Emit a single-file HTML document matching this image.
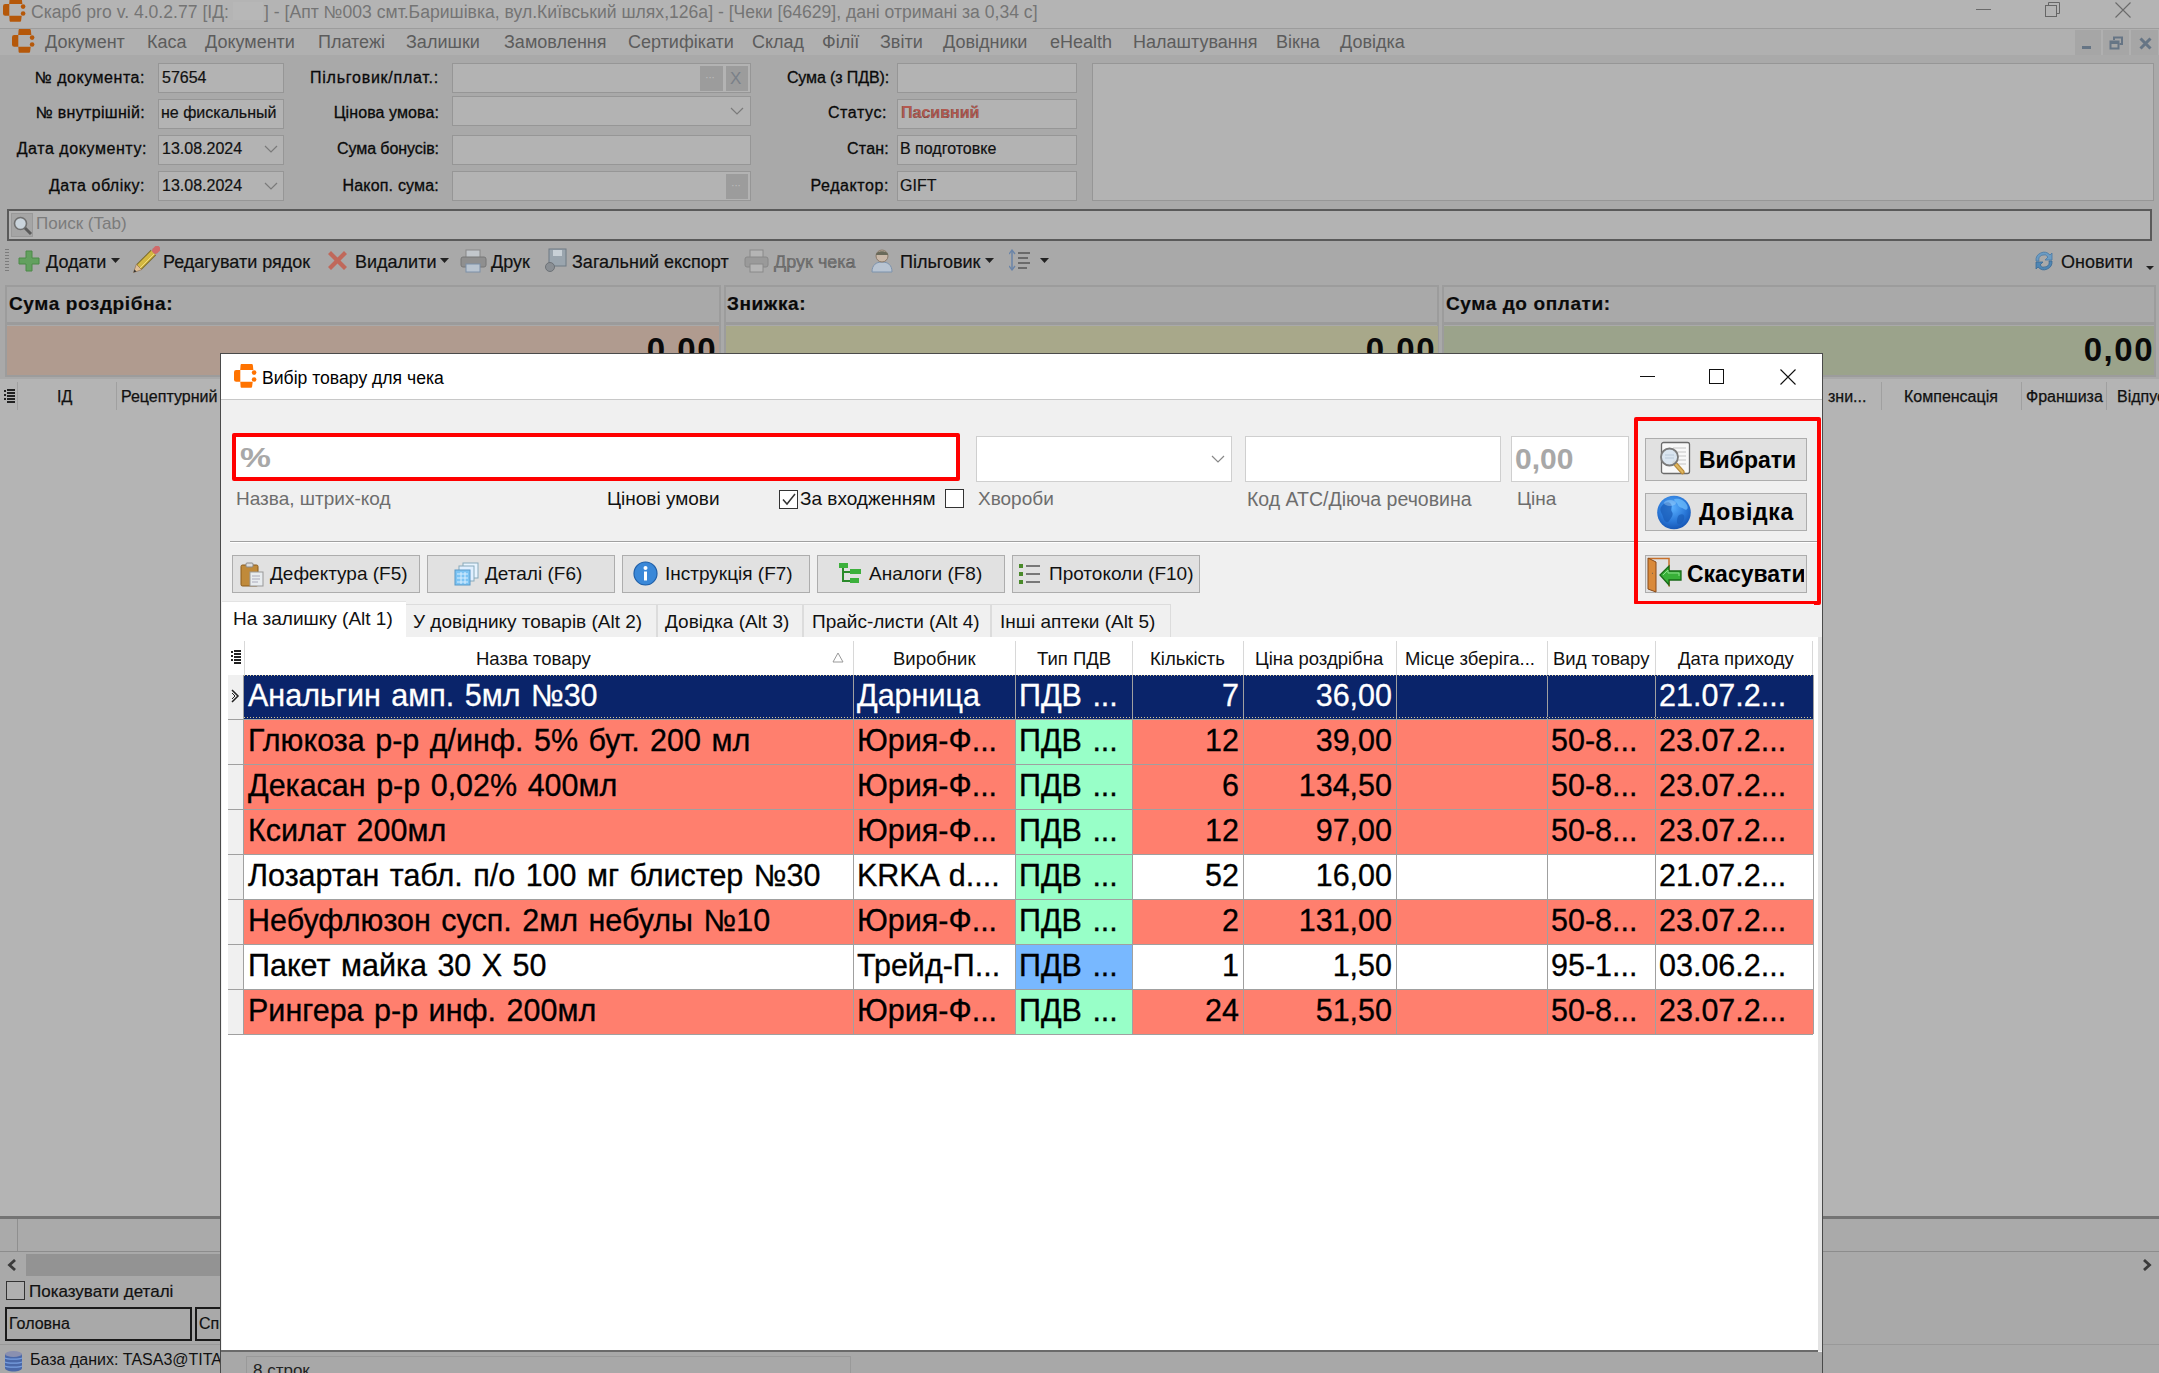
<!DOCTYPE html>
<html><head><meta charset="utf-8">
<style>
*{box-sizing:border-box;margin:0;padding:0}
html,body{width:2159px;height:1373px;overflow:hidden}
body{position:relative;background:#a9a9a9;font-family:"Liberation Sans",sans-serif;color:#000}
.a{position:absolute;white-space:nowrap}
#title{left:0;top:0;width:2159px;height:29px;background:#b4b4b4;border-bottom:1px solid #9c9c9c}
#menu{left:0;top:29px;width:2159px;height:26px;background:#b0b0b0}
.mi{top:32px;font-size:18px;color:#5c5c5c}
.lbl{font-size:16px;color:#0a0a0a;text-align:right;-webkit-text-stroke:0.3px #0a0a0a}
.inp{background:#b3b3b3;border:1px solid #969696;height:30px}
.itx{font-size:16px;color:#111;-webkit-text-stroke:0.2px #111}

.tb{top:252px;font-size:18px;color:#111;-webkit-text-stroke:0.2px #111}
.sp{top:285px;height:92px;background:#a9a9a9;border:2px solid #9c9c9c}
.sv{top:326px;height:49px}
.sh{top:293px;font-size:19px;font-weight:bold;color:#0a0a0a;letter-spacing:0.6px;-webkit-text-stroke:0.2px #0a0a0a}
.snum{top:331px;font-size:33px;font-weight:bold;color:#0a0a0a;letter-spacing:1.5px}
.gh{top:388px;font-size:16px;color:#111;-webkit-text-stroke:0.25px #111}

.dlbl{top:488px;font-size:19px}
.btn{background:#e1e1e1;border:1px solid #adadad}
.bbt{font-size:23px;font-weight:bold;color:#000}
.fbt{top:563px;font-size:19px;color:#111}
.tab{top:604px;height:33px;background:#f0f0f0;border:1px solid #dcdcdc;border-bottom:none}
.ttx{top:611px;font-size:19px;color:#111}
.ghd{top:648px;font-size:18.5px;color:#111}
.gr{font-size:30.5px;word-spacing:2px;-webkit-text-stroke:0.3px currentColor}
</style></head><body>

<!-- TITLE -->
<div class="a" id="title"></div>
<svg class="a" style="left:2px;top:-3px" width="26" height="27"><g fill="#b5580a"><path d="M8.2 1h10.6q0.8 0 1 1l0.6 5H7.2l0.4-5q0.1-1 0.6-1z"/><path d="M7.3 7v11.8H3.2Q1 18.8 1 16.5v-7.2Q1 7 3.2 7z"/><path d="M7.3 18.8h12.4l-0.6 5q-0.2 1-1 1H8.4q-0.7 0-0.8-1z"/><circle cx="21.1" cy="9.6" r="2.3"/><circle cx="21.1" cy="16.5" r="2.3"/></g></svg>
<div class="a" style="left:31px;top:2px;font-size:17.6px;color:#747474">Скарб pro v. 4.0.2.77 [ІД:</div>
<div class="a" style="left:233px;top:2px;width:30px;height:18px;background:#b7b7b7"></div>
<div class="a" style="left:264px;top:2px;font-size:17.6px;color:#747474">] - [Апт №003 смт.Баришівка, вул.Київський шлях,126а] - [Чеки [64629], дані отримані за 0,34 с]</div>

<!-- MENU -->
<div class="a" id="menu"></div>
<svg class="a" style="left:11px;top:28px" width="26" height="27"><g fill="#b5580a"><path d="M8.2 1h10.6q0.8 0 1 1l0.6 5H7.2l0.4-5q0.1-1 0.6-1z"/><path d="M7.3 7v11.8H3.2Q1 18.8 1 16.5v-7.2Q1 7 3.2 7z"/><path d="M7.3 18.8h12.4l-0.6 5q-0.2 1-1 1H8.4q-0.7 0-0.8-1z"/><circle cx="21.1" cy="9.6" r="2.3"/><circle cx="21.1" cy="16.5" r="2.3"/></g></svg>
<div class="a mi" style="left:45px">Документ</div>
<div class="a mi" style="left:147px">Каса</div>
<div class="a mi" style="left:205px">Документи</div>
<div class="a mi" style="left:318px">Платежі</div>
<div class="a mi" style="left:406px">Залишки</div>
<div class="a mi" style="left:504px">Замовлення</div>
<div class="a mi" style="left:628px">Сертифікати</div>
<div class="a mi" style="left:752px">Склад</div>
<div class="a mi" style="left:822px">Філії</div>
<div class="a mi" style="left:880px">Звіти</div>
<div class="a mi" style="left:943px">Довідники</div>
<div class="a mi" style="left:1050px">eHealth</div>
<div class="a mi" style="left:1133px">Налаштування</div>
<div class="a mi" style="left:1276px">Вікна</div>
<div class="a mi" style="left:1340px">Довідка</div>

<!-- FORM -->
<div class="a lbl" style="right:2014px;top:69px;letter-spacing:0.54px">№ документа:</div>
<div class="a lbl" style="right:2014px;top:104px;letter-spacing:0.32px">№ внутрішній:</div>
<div class="a lbl" style="right:2012px;top:140px;letter-spacing:0.57px">Дата документу:</div>
<div class="a lbl" style="right:2014px;top:177px;letter-spacing:0.52px">Дата обліку:</div>
<div class="a inp" style="left:158px;top:63px;width:126px"></div>
<div class="a inp" style="left:158px;top:99px;width:126px"></div>
<div class="a inp" style="left:158px;top:135px;width:126px"></div>
<div class="a inp" style="left:158px;top:171px;width:126px"></div>
<div class="a itx" style="left:162px;top:69px">57654</div>
<div class="a itx" style="left:161px;top:104px">не фискальный</div>
<div class="a itx" style="left:162px;top:140px">13.08.2024</div>
<div class="a itx" style="left:162px;top:177px">13.08.2024</div>

<div class="a lbl" style="right:1720px;top:69px;letter-spacing:0.75px">Пільговик/плат.:</div>
<div class="a lbl" style="right:1720px;top:104px;letter-spacing:0.09px">Цінова умова:</div>
<div class="a lbl" style="right:1720px;top:140px;letter-spacing:-0.07px">Сума бонусів:</div>
<div class="a lbl" style="right:1720px;top:177px;letter-spacing:0.19px">Накоп. сума:</div>
<div class="a inp" style="left:452px;top:63px;width:299px"></div>
<div class="a inp" style="left:452px;top:96px;width:299px"></div>
<div class="a inp" style="left:452px;top:135px;width:299px"></div>
<div class="a inp" style="left:452px;top:171px;width:299px"></div>

<div class="a lbl" style="right:1270px;top:69px;letter-spacing:-0.12px">Сума (з ПДВ):</div>
<div class="a lbl" style="right:1272px;top:104px;letter-spacing:0.57px">Статус:</div>
<div class="a lbl" style="right:1270px;top:140px;letter-spacing:0.22px">Стан:</div>
<div class="a lbl" style="right:1270px;top:177px;letter-spacing:0.58px">Редактор:</div>
<div class="a inp" style="left:897px;top:63px;width:180px"></div>
<div class="a inp" style="left:897px;top:99px;width:180px"></div>
<div class="a inp" style="left:897px;top:135px;width:180px"></div>
<div class="a inp" style="left:897px;top:171px;width:180px"></div>
<div class="a itx" style="left:901px;top:104px;color:#b5584f;font-weight:bold">Пасивний</div>
<div class="a itx" style="left:900px;top:140px">В подготовке</div>
<div class="a itx" style="left:900px;top:177px">GIFT</div>


<svg class="a" style="left:264px;top:145px" width="14" height="8"><path d="M1 1l6 6 6-6" fill="none" stroke="#7a7a7a" stroke-width="1.2"/></svg>
<svg class="a" style="left:264px;top:182px" width="14" height="8"><path d="M1 1l6 6 6-6" fill="none" stroke="#7a7a7a" stroke-width="1.2"/></svg>
<svg class="a" style="left:730px;top:107px" width="14" height="8"><path d="M1 1l6 6 6-6" fill="none" stroke="#7a7a7a" stroke-width="1.2"/></svg>
<div class="a" style="left:700px;top:66px;width:23px;height:25px;background:#9c9c9c"></div>
<div class="a" style="left:726px;top:66px;width:22px;height:25px;background:#9c9c9c"></div>
<div class="a" style="left:726px;top:174px;width:22px;height:25px;background:#9c9c9c"></div>
<div class="a" style="left:705px;top:71px;font-size:11px;color:#bdbdbd;letter-spacing:-0.5px">···</div>
<div class="a" style="left:731px;top:179px;font-size:11px;color:#bdbdbd;letter-spacing:-0.5px">···</div>
<div class="a" style="left:730px;top:69px;font-size:17px;color:#7a8088">X</div>
<div class="a inp" style="left:1092px;top:63px;width:1062px;height:138px"></div>


<!-- WINDOW CONTROLS -->
<div class="a" style="left:1976px;top:9px;width:15px;height:1px;background:#6a6a6a"></div>
<svg class="a" style="left:2044px;top:1px" width="18" height="18"><path d="M4.5 4.5V1.5h11v11h-3" fill="none" stroke="#666" stroke-width="1"/><rect x="1.5" y="4.5" width="11" height="11" fill="none" stroke="#666" stroke-width="1"/></svg>
<svg class="a" style="left:2115px;top:2px" width="16" height="16"><path d="M0.5 0.5L15.5 15.5M15.5 0.5L0.5 15.5" stroke="#6a6a6a" stroke-width="1.1"/></svg>
<!-- MDI buttons -->
<div class="a" style="left:2075px;top:30px;width:26px;height:25px;background:#a6a6a6"></div>
<div class="a" style="left:2103px;top:30px;width:26px;height:25px;background:#a6a6a6"></div>
<div class="a" style="left:2131px;top:30px;width:27px;height:25px;background:#a6a6a6"></div>
<div class="a" style="left:2082px;top:46px;width:9px;height:3px;background:#667585"></div>
<svg class="a" style="left:2109px;top:36px" width="16" height="14"><path d="M5 4V1.5h8v6.5h-2.5" fill="none" stroke="#667585" stroke-width="2"/><rect x="1.5" y="5.5" width="8" height="7" fill="none" stroke="#667585" stroke-width="2"/><path d="M1 6.5h9" stroke="#667585" stroke-width="3"/></svg>
<svg class="a" style="left:2139px;top:37px" width="13" height="13"><path d="M1.5 1.5L11.5 11.5M11.5 1.5L1.5 11.5" stroke="#667585" stroke-width="3"/></svg>

<!-- SEARCH BAR -->
<div class="a" style="left:7px;top:209px;width:2145px;height:32px;border:2px solid #5a5a5a;background:#b3b3b3"></div>
<div class="a" style="left:11px;top:213px;width:22px;height:24px;background:#a5a5a5;border:1px solid #999"></div>
<svg class="a" style="left:12px;top:215px" width="22" height="22"><circle cx="8.5" cy="8.5" r="6" fill="#c9d3db" stroke="#6f6f6f" stroke-width="1.6"/><path d="M13 13L19 19" stroke="#5a5a5a" stroke-width="3"/></svg>
<div class="a" style="left:36px;top:214px;font-size:17px;color:#7b7b7b">Поиск (Tab)</div>

<!-- TOOLBAR -->
<div class="a" style="left:5px;top:249px;width:4px;height:23px;background:repeating-linear-gradient(180deg,#7c7c7c 0 1.5px,transparent 1.5px 3px)"></div>
<svg class="a" style="left:18px;top:250px" width="22" height="22"><path d="M8 1h6v7h7v6h-7v7H8v-7H1V8h7z" fill="#63a05f" stroke="#4d8a49" stroke-width="1"/></svg>
<div class="a tb" style="left:46px">Додати</div>
<svg class="a" style="left:111px;top:258px" width="9" height="5"><path d="M0 0h9L4.5 5z" fill="#222"/></svg>
<svg class="a" style="left:132px;top:246px" width="28" height="28"><line x1="7" y1="21" x2="21.5" y2="6.5" stroke="#7a6a2a" stroke-width="7.5"/><line x1="7" y1="21" x2="21.5" y2="6.5" stroke="#d4b840" stroke-width="5.5"/><line x1="8" y1="22" x2="22" y2="8" stroke="#efdc80" stroke-width="1"/><line x1="21.5" y1="6.5" x2="23.5" y2="4.5" stroke="#a0a0a0" stroke-width="7"/><line x1="23.5" y1="4.5" x2="25" y2="3" stroke="#d06a6a" stroke-width="6.5" stroke-linecap="round"/><path d="M4.35 18.35L9.65 23.65L1.5 26.5z" fill="#e0c098" stroke="#8a6a4a" stroke-width="0.6"/><path d="M1.5 26.5l3-1-2-2z" fill="#333"/></svg>
<div class="a tb" style="left:163px">Редагувати рядок</div>
<svg class="a" style="left:326px;top:250px" width="23" height="22"><path d="M2 4l3-3 6.5 6.5L18 1l3 3-6.5 6.5L21 17l-3 3-6.5-6.5L5 20l-3-3 6.5-6.5z" fill="#c0685a"/></svg>
<div class="a tb" style="left:355px">Видалити</div>
<svg class="a" style="left:440px;top:258px" width="9" height="5"><path d="M0 0h9L4.5 5z" fill="#222"/></svg>
<svg class="a" style="left:460px;top:249px" width="27" height="24"><rect x="6" y="1" width="14" height="8" fill="#c2c7cc" stroke="#888"/><rect x="1" y="8" width="25" height="10" rx="2" fill="#8f8f8f" stroke="#777"/><rect x="6" y="15" width="14" height="8" fill="#b9c4d0" stroke="#7d90a8"/></svg>
<div class="a tb" style="left:491px">Друк</div>
<svg class="a" style="left:544px;top:248px" width="23" height="25"><rect x="5" y="1" width="17" height="17" fill="#9aa5ae" stroke="#6f7a84"/><rect x="9" y="2" width="9" height="6" fill="#c8d0d6"/><circle cx="6" cy="19" r="4.5" fill="#8a8f94" stroke="#6d7277"/></svg>
<div class="a tb" style="left:572px">Загальний експорт</div>
<svg class="a" style="left:744px;top:249px" width="25" height="24"><rect x="6" y="1" width="13" height="8" fill="#b5b5b5" stroke="#8a8a8a"/><rect x="1" y="8" width="23" height="10" rx="2" fill="#9a9a9a" stroke="#888"/><rect x="6" y="15" width="13" height="8" fill="#b5b5b5" stroke="#8a8a8a"/></svg>
<div class="a tb" style="left:774px;color:#777">Друк чека</div>
<svg class="a" style="left:870px;top:248px" width="24" height="25"><path d="M2 24c0-7 4-10 10-10s10 3 10 10z" fill="#b8c4d2" stroke="#7d93ad"/><circle cx="12" cy="8" r="6" fill="#c9b8a8" stroke="#8a7a6a"/><path d="M6 7c0-5 12-5 12 0" fill="#6a6a5a"/></svg>
<div class="a tb" style="left:900px">Пільговик</div>
<svg class="a" style="left:985px;top:258px" width="9" height="5"><path d="M0 0h9L4.5 5z" fill="#222"/></svg>
<svg class="a" style="left:1009px;top:249px" width="22" height="22"><path d="M3 2v18" stroke="#6a84a8" stroke-width="1.5"/><path d="M0 5l3-4 3 4M0 17l3 4 3-4" fill="none" stroke="#6a84a8" stroke-width="1.3"/><path d="M9 4h12M9 9h10M9 14h12M9 19h9" stroke="#555" stroke-width="1.6"/></svg>
<svg class="a" style="left:1040px;top:258px" width="9" height="5"><path d="M0 0h9L4.5 5z" fill="#222"/></svg>
<svg class="a" style="left:2032px;top:249px" width="24" height="24"><path d="M4 12a8 8 0 0 1 14-6l2-2v7h-7l3-3a5 5 0 0 0-9 4z" fill="#6b9cc4" stroke="#4a7aa4" stroke-width="0.8"/><path d="M20 12a8 8 0 0 1-14 6l-2 2v-7h7l-3 3a5 5 0 0 0 9-4z" fill="#4f86b4" stroke="#3a6a94" stroke-width="0.8"/></svg>
<div class="a tb" style="left:2061px">Оновити</div>
<svg class="a" style="left:2146px;top:266px" width="8" height="4"><path d="M0 0h8L4 4z" fill="#222"/></svg>

<!-- SUMMARY PANELS -->
<div class="a sp" style="left:5px;width:716px"></div>
<div class="a sp" style="left:724px;width:715px"></div>
<div class="a sp" style="left:1442px;width:714px"></div>
<div class="a sv" style="left:7px;width:712px;background:#b09b8f"></div>
<div class="a sv" style="left:726px;width:712px;background:#a8a88a"></div>
<div class="a sv" style="left:1444px;width:710px;background:#9ba38b"></div>
<div class="a" style="left:7px;top:322px;width:712px;height:3px;background:#9b9b9b"></div>
<div class="a" style="left:726px;top:322px;width:712px;height:3px;background:#9b9b9b"></div>
<div class="a" style="left:1444px;top:322px;width:710px;height:3px;background:#9b9b9b"></div>
<div class="a sh" style="left:9px">Сума роздрібна:</div>
<div class="a sh" style="left:727px">Знижка:</div>
<div class="a sh" style="left:1446px">Сума до оплати:</div>
<div class="a snum" style="right:1442px">0,00</div>
<div class="a snum" style="right:723px">0,00</div>
<div class="a snum" style="right:5px">0,00</div>

<!-- MAIN GRID -->
<div class="a" style="left:0;top:379px;width:2159px;height:838px;background:#b4b4b4"></div>
<div class="a" style="left:17px;top:382px;width:1px;height:28px;background:#a0a0a0"></div>
<div class="a" style="left:116px;top:382px;width:1px;height:28px;background:#a0a0a0"></div>
<div class="a" style="left:1881px;top:382px;width:1px;height:28px;background:#a0a0a0"></div>
<div class="a" style="left:2021px;top:382px;width:1px;height:28px;background:#a0a0a0"></div>
<div class="a" style="left:2106px;top:382px;width:1px;height:28px;background:#a0a0a0"></div>
<svg class="a" style="left:4px;top:389px" width="11" height="14"><g fill="#222"><rect x="0" y="1" width="2" height="2"/><rect x="0" y="5" width="2" height="2"/><rect x="0" y="9" width="2" height="2"/><rect x="3" y="0" width="8" height="2"/><rect x="3" y="3" width="8" height="2"/><rect x="3" y="6" width="8" height="2"/><rect x="3" y="9" width="8" height="2"/><rect x="3" y="12" width="8" height="2"/></g></svg>
<div class="a gh" style="left:57px">ІД</div>
<div class="a gh" style="left:121px">Рецептурний</div>
<div class="a gh" style="left:1828px">зни...</div>
<div class="a gh" style="left:1904px">Компенсація</div>
<div class="a gh" style="left:2026px">Франшиза</div>
<div class="a gh" style="left:2117px">Відпуск</div>

<!-- BOTTOM -->
<div class="a" style="left:0;top:1216px;width:2159px;height:3px;background:#747474"></div>
<div class="a" style="left:0;top:1219px;width:2159px;height:32px;background:#aaaaaa"></div>
<div class="a" style="left:17px;top:1219px;width:1px;height:32px;background:#8f8f8f"></div>
<div class="a" style="left:0;top:1251px;width:2159px;height:1px;background:#8c8c8c"></div>
<div class="a" style="left:0;top:1252px;width:2159px;height:121px;background:#a9a9a9"></div>
<div class="a" style="left:26px;top:1254px;width:1500px;height:22px;background:#939393"></div>
<svg class="a" style="left:7px;top:1259px" width="10" height="12"><path d="M8 1L2.5 6 8 11" fill="none" stroke="#3a3a3a" stroke-width="2.8"/></svg>
<svg class="a" style="left:2142px;top:1259px" width="10" height="12"><path d="M2 1l5.5 5L2 11" fill="none" stroke="#3a3a3a" stroke-width="2.8"/></svg>
<div class="a" style="left:6px;top:1281px;width:19px;height:19px;border:1px solid #333;background:#b0b0b0"></div>
<div class="a" style="left:29px;top:1282px;font-size:17px;color:#111;-webkit-text-stroke:0.2px #111">Показувати деталі</div>
<div class="a" style="left:5px;top:1307px;width:187px;height:34px;border:2px solid #1a1a1a"></div>
<div class="a" style="left:9px;top:1315px;font-size:16px;color:#111;-webkit-text-stroke:0.2px #111">Головна</div>
<div class="a" style="left:195px;top:1307px;width:187px;height:34px;border:2px solid #1a1a1a"></div>
<div class="a" style="left:199px;top:1315px;font-size:16px;color:#111;-webkit-text-stroke:0.2px #111">Список</div>
<div class="a" style="left:0;top:1344px;width:2159px;height:1px;background:#999"></div>
<svg class="a" style="left:4px;top:1350px" width="20" height="22"><path d="M1 4v14c0 2 4 3.5 8.5 3.5S18 20 18 18V4z" fill="#4a68a8"/><ellipse cx="9.5" cy="4" rx="8.5" ry="3" fill="#8a90b0"/><path d="M1 8c2 1.5 15 1.5 17 0M1 12c2 1.5 15 1.5 17 0M1 16c2 1.5 15 1.5 17 0" stroke="#7aa0e0" stroke-width="1.3" fill="none"/></svg>
<div class="a" style="left:30px;top:1351px;font-size:16px;color:#111">База даних: TASA3@TITAN</div>

<!-- DIALOG -->
<div class="a" style="left:220px;top:353px;width:1603px;height:1020px;background:#f0f0f0;border:1px solid #4a4a4a;border-bottom:none"></div>
<div class="a" style="left:221px;top:354px;width:1601px;height:46px;background:#fff;border-bottom:1px solid #c8c8c8"></div>
<svg class="a" style="left:233px;top:363px" width="26" height="27"><g fill="#ff7300"><path d="M8.2 1h10.6q0.8 0 1 1l0.6 5H7.2l0.4-5q0.1-1 0.6-1z"/><path d="M7.3 7v11.8H3.2Q1 18.8 1 16.5v-7.2Q1 7 3.2 7z"/><path d="M7.3 18.8h12.4l-0.6 5q-0.2 1-1 1H8.4q-0.7 0-0.8-1z"/><circle cx="21.1" cy="9.6" r="2.3"/><circle cx="21.1" cy="16.5" r="2.3"/></g></svg>
<div class="a" style="left:262px;top:368px;font-size:17.6px;color:#000">Вибір товару для чека</div>
<div class="a" style="left:1640px;top:376px;width:15px;height:1px;background:#111"></div>
<div class="a" style="left:1709px;top:369px;width:15px;height:15px;border:1px solid #111"></div>
<svg class="a" style="left:1780px;top:369px" width="16" height="16"><path d="M0.5 0.5L15.5 15.5M15.5 0.5L0.5 15.5" stroke="#111" stroke-width="1.1"/></svg>

<!-- search row -->
<div class="a" style="left:232px;top:433px;width:728px;height:48px;border:4px solid #ff0000;border-radius:2px;background:#fff"></div>
<div class="a" style="left:240px;top:441px;font-size:28.5px;font-weight:bold;color:#a8a8a8;transform:scaleX(1.22);transform-origin:0 0">%</div>
<div class="a dlbl" style="left:236px;color:#6d6d6d">Назва, штрих-код</div>
<div class="a dlbl" style="left:607px;color:#111">Цінові умови</div>
<div class="a" style="left:779px;top:490px;width:19px;height:19px;border:1px solid #333;background:#fff"></div>
<svg class="a" style="left:780px;top:491px" width="17" height="17"><path d="M3 8.5l4 4.5 8-10" fill="none" stroke="#333" stroke-width="1.5"/></svg>
<div class="a dlbl" style="left:800px;color:#111">За входженням</div>
<div class="a" style="left:945px;top:489px;width:19px;height:19px;border:1px solid #333;background:#fff"></div>
<div class="a" style="left:976px;top:436px;width:256px;height:46px;border:1px solid #cfcfcf;background:#fff"></div>
<svg class="a" style="left:1211px;top:455px" width="14" height="8"><path d="M1 1l6 6 6-6" fill="none" stroke="#888" stroke-width="1.2"/></svg>
<div class="a dlbl" style="left:978px;color:#6d6d6d">Хвороби</div>
<div class="a" style="left:1245px;top:436px;width:256px;height:46px;border:1px solid #cfcfcf;background:#fff"></div>
<div class="a dlbl" style="left:1247px;color:#6d6d6d;font-size:19.5px">Код АТС/Діюча речовина</div>
<div class="a" style="left:1511px;top:436px;width:118px;height:46px;border:1px solid #cfcfcf;background:#fff"></div>
<div class="a" style="left:1515px;top:442px;font-size:30px;font-weight:bold;color:#a8a8a8">0,00</div>
<div class="a dlbl" style="left:1517px;color:#6d6d6d">Ціна</div>

<!-- right buttons -->
<div class="a" style="left:230px;top:541px;width:1588px;height:1px;background:#a0a0a0"></div>
<div class="a" style="left:230px;top:542px;width:1588px;height:1px;background:#fff"></div>
<div class="a" style="left:1634px;top:417px;width:187px;height:188px;border:4px solid #ff0000;border-radius:2px"></div>
<div class="a btn" style="left:1645px;top:438px;width:162px;height:43px"></div>
<div class="a btn" style="left:1645px;top:493px;width:162px;height:38px"></div>
<div class="a btn" style="left:1645px;top:555px;width:162px;height:38px"></div>
<div class="a bbt" style="left:1699px;top:447px">Вибрати</div>
<div class="a bbt" style="left:1699px;top:499px;letter-spacing:0.7px">Довідка</div>
<div class="a bbt" style="left:1687px;top:561px;width:117px;overflow:hidden">Скасувати</div>
<svg class="a" style="left:1659px;top:441px" width="33" height="36"><rect x="2.5" y="1.5" width="28" height="31" rx="2" fill="#f8f8f8" stroke="#6a6a6a" stroke-width="1.3"/><path d="M14 7h13M14 11h13M14 15h13M14 19h13M14 23h13" stroke="#c4c4c4" stroke-width="1"/><path d="M15.5 22l8 9" stroke="#b88a3a" stroke-width="4.5" stroke-linecap="round"/><path d="M15.5 22l8 9" stroke="#e0b860" stroke-width="2" stroke-linecap="round"/><circle cx="10.5" cy="16" r="8.5" fill="#d6e2ee" fill-opacity="0.9" stroke="#7a7a7a" stroke-width="1.8"/><path d="M6 14h9M6 17h9" stroke="#b8c8d8" stroke-width="1"/></svg>
<svg class="a" style="left:1656px;top:495px" width="36" height="35"><defs><radialGradient id="gl" cx="0.45" cy="0.35" r="0.75"><stop offset="0" stop-color="#5ab0ff"/><stop offset="0.55" stop-color="#2a78d8"/><stop offset="1" stop-color="#0f4aa8"/></radialGradient></defs><circle cx="18" cy="17.5" r="16.8" fill="url(#gl)"/><path d="M5 12c3-5 8-6 10-3s-1 5 1 8-1 6-3 9-5 0-6-4-4-6-2-10z" fill="#1a5cb8" opacity="0.75"/><path d="M19 4c5-1 10 2 12 6s-1 6-3 4-5-1-6-4-6-5-3-6z" fill="#70c0ff" opacity="0.7"/><path d="M23 20c4-2 6 0 5 4s-4 6-6 5-1-7 1-9z" fill="#1a5cb8" opacity="0.7"/><ellipse cx="14" cy="8" rx="6" ry="3" fill="#bfe4ff" opacity="0.35"/></svg>
<svg class="a" style="left:1646px;top:556px" width="42" height="37"><path d="M3 2.5h20v28" fill="none" stroke="#c8702a" stroke-width="1.5"/><path d="M2 2l8 4v30l-8-3z" fill="#d98a3a" stroke="#8a4a18" stroke-width="1"/><path d="M6 17l0.8 0.5" stroke="#555" stroke-width="1"/><path d="M14 19l9-9v5h12v9H23v5z" fill="#38b038" stroke="#176a17" stroke-width="1.3"/><path d="M17 19l5-5v3h11v3" fill="none" stroke="#8ae08a" stroke-width="1"/></svg>

<!-- function buttons -->
<div class="a btn" style="left:232px;top:555px;width:188px;height:38px"></div>
<div class="a btn" style="left:427px;top:555px;width:188px;height:38px"></div>
<div class="a btn" style="left:622px;top:555px;width:188px;height:38px"></div>
<div class="a btn" style="left:817px;top:555px;width:188px;height:38px"></div>
<div class="a btn" style="left:1012px;top:555px;width:188px;height:38px"></div>
<div class="a fbt" style="left:270px">Дефектура (F5)</div>
<div class="a fbt" style="left:485px">Деталі (F6)</div>
<div class="a fbt" style="left:665px">Інструкція (F7)</div>
<div class="a fbt" style="left:869px">Аналоги (F8)</div>
<div class="a fbt" style="left:1049px">Протоколи (F10)</div>
<svg class="a" style="left:240px;top:562px" width="24" height="25"><rect x="1" y="3" width="17" height="21" rx="1.5" fill="#c08a3a" stroke="#8a5a1a"/><rect x="6" y="1" width="7" height="4" rx="1" fill="#ddd" stroke="#888"/><rect x="10" y="10" width="13" height="14" fill="#e8ecef" stroke="#999"/><path d="M12 14h8M12 17h8M12 20h6" stroke="#aab" stroke-width="1"/></svg>
<svg class="a" style="left:454px;top:562px" width="25" height="24"><rect x="9" y="1" width="15" height="15" fill="#e8f4ff" stroke="#8ab"/><rect x="5" y="4" width="15" height="15" fill="#e0efff" stroke="#8ab"/><rect x="1" y="8" width="15" height="15" fill="#7cc4f4" stroke="#5a9ac8"/><path d="M3 12h11M3 16h11M3 20h11M7 10v12M11 10v12" stroke="#d8eeff" stroke-width="1"/></svg>
<svg class="a" style="left:633px;top:561px" width="25" height="25"><circle cx="12.5" cy="12.5" r="11.5" fill="#3a88d8" stroke="#1f5fa8" stroke-width="1.2"/><circle cx="12.5" cy="7" r="2" fill="#fff"/><rect x="11" y="10.5" width="3" height="9" fill="#fff"/></svg>
<svg class="a" style="left:838px;top:561px" width="24" height="25"><path d="M1 2h9v5H1zM12 8h11v5H12zM12 17h9v5h-9z" fill="#3cb03c"/><path d="M5 7v13h7M5 11h7" stroke="#2a8a2a" stroke-width="2" fill="none"/></svg>
<svg class="a" style="left:1018px;top:562px" width="24" height="24"><path d="M1 2h4v4H1zM1 10h4v4H1zM1 18h4v4H1z" fill="#4a8a2a"/><path d="M8 4h14M8 12h14M8 20h14" stroke="#555" stroke-width="1.6"/></svg>

<!-- tabs -->
<div class="a" style="left:404px;top:604px;width:1410px;height:33px;background:#f0f0f0"></div>
<div class="a tab" style="left:405px;width:252px"></div>
<div class="a tab" style="left:657px;width:146px"></div>
<div class="a tab" style="left:803px;width:188px"></div>
<div class="a tab" style="left:991px;width:180px"></div>
<div class="a" style="left:222px;top:601px;width:184px;height:40px;background:#fff;border-top:1px solid #e3e3e3"></div>
<div class="a ttx" style="left:233px;top:608px">На залишку (Alt 1)</div>
<div class="a ttx" style="left:413px">У довіднику товарів (Alt 2)</div>
<div class="a ttx" style="left:665px">Довідка (Alt 3)</div>
<div class="a ttx" style="left:812px">Прайс-листи (Alt 4)</div>
<div class="a ttx" style="left:1000px">Інші аптеки (Alt 5)</div>

<!-- grid -->
<div class="a" style="left:222px;top:637px;width:1596px;height:714px;background:#fff"></div>
<div class="a" style="left:1818px;top:637px;width:4px;height:714px;background:#e3e3e3"></div>
<div class="a" style="left:228px;top:675px;width:16px;height:359px;background:#f0f0f0"></div>
<svg class="a" style="left:231px;top:650px" width="10" height="14"><g fill="#222"><rect x="0" y="1" width="2" height="2"/><rect x="0" y="5" width="2" height="2"/><rect x="0" y="9" width="2" height="2"/><rect x="3" y="0" width="7" height="2"/><rect x="3" y="3" width="7" height="2"/><rect x="3" y="6" width="7" height="2"/><rect x="3" y="9" width="7" height="2"/><rect x="3" y="12" width="7" height="2"/></g></svg>
<div class="a" style="left:244px;top:641px;width:1px;height:34px;background:#d8d8d8"></div>
<div class="a" style="left:853px;top:641px;width:1px;height:34px;background:#d8d8d8"></div>
<div class="a" style="left:1015px;top:641px;width:1px;height:34px;background:#d8d8d8"></div>
<div class="a" style="left:1132px;top:641px;width:1px;height:34px;background:#d8d8d8"></div>
<div class="a" style="left:1243px;top:641px;width:1px;height:34px;background:#d8d8d8"></div>
<div class="a" style="left:1396px;top:641px;width:1px;height:34px;background:#d8d8d8"></div>
<div class="a" style="left:1547px;top:641px;width:1px;height:34px;background:#d8d8d8"></div>
<div class="a" style="left:1655px;top:641px;width:1px;height:34px;background:#d8d8d8"></div>
<div class="a" style="left:1812px;top:641px;width:1px;height:34px;background:#d8d8d8"></div>
<div class="a ghd" style="left:476px">Назва товару</div>
<svg class="a" style="left:832px;top:652px" width="12" height="12"><path d="M6 1L11 10H1z" fill="none" stroke="#999" stroke-width="1"/></svg>
<div class="a ghd" style="left:893px">Виробник</div>
<div class="a ghd" style="left:1037px">Тип ПДВ</div>
<div class="a ghd" style="left:1150px">Кількість</div>
<div class="a ghd" style="left:1255px">Ціна роздрібна</div>
<div class="a ghd" style="left:1405px">Місце зберіга...</div>
<div class="a ghd" style="left:1553px">Вид товару</div>
<div class="a ghd" style="left:1678px">Дата приходу</div>
<div class="a" style="left:244px;top:675px;width:1569px;height:44px;background:#0a246a"></div>
<div class="a" style="left:228px;top:719px;width:1585px;height:1px;background:#a0a0a0"></div>
<div class="a gr" style="left:248px;top:678px;color:#fff">Анальгин амп. 5мл №30</div>
<div class="a gr" style="left:857px;top:678px;color:#fff">Дарница</div>
<div class="a gr" style="left:1019px;top:678px;color:#fff">ПДВ ...</div>
<div class="a gr" style="right:920px;top:678px;color:#fff">7</div>
<div class="a gr" style="right:767px;top:678px;color:#fff">36,00</div>
<div class="a gr" style="left:1659px;top:678px;color:#fff">21.07.2...</div>
<div class="a" style="left:244px;top:720px;width:1569px;height:44px;background:#ff7f6e"></div>
<div class="a" style="left:1016px;top:720px;width:116px;height:44px;background:#98ffc8"></div>
<div class="a" style="left:228px;top:764px;width:1585px;height:1px;background:#a0a0a0"></div>
<div class="a gr" style="left:248px;top:723px;color:#000">Глюкоза р-р д/инф. 5% бут. 200 мл</div>
<div class="a gr" style="left:857px;top:723px;color:#000">Юрия-Ф...</div>
<div class="a gr" style="left:1019px;top:723px;color:#000">ПДВ ...</div>
<div class="a gr" style="right:920px;top:723px;color:#000">12</div>
<div class="a gr" style="right:767px;top:723px;color:#000">39,00</div>
<div class="a gr" style="left:1551px;top:723px;color:#000">50-8...</div>
<div class="a gr" style="left:1659px;top:723px;color:#000">23.07.2...</div>
<div class="a" style="left:244px;top:765px;width:1569px;height:44px;background:#ff7f6e"></div>
<div class="a" style="left:1016px;top:765px;width:116px;height:44px;background:#98ffc8"></div>
<div class="a" style="left:228px;top:809px;width:1585px;height:1px;background:#a0a0a0"></div>
<div class="a gr" style="left:248px;top:768px;color:#000">Декасан р-р 0,02% 400мл</div>
<div class="a gr" style="left:857px;top:768px;color:#000">Юрия-Ф...</div>
<div class="a gr" style="left:1019px;top:768px;color:#000">ПДВ ...</div>
<div class="a gr" style="right:920px;top:768px;color:#000">6</div>
<div class="a gr" style="right:767px;top:768px;color:#000">134,50</div>
<div class="a gr" style="left:1551px;top:768px;color:#000">50-8...</div>
<div class="a gr" style="left:1659px;top:768px;color:#000">23.07.2...</div>
<div class="a" style="left:244px;top:810px;width:1569px;height:44px;background:#ff7f6e"></div>
<div class="a" style="left:1016px;top:810px;width:116px;height:44px;background:#98ffc8"></div>
<div class="a" style="left:228px;top:854px;width:1585px;height:1px;background:#a0a0a0"></div>
<div class="a gr" style="left:248px;top:813px;color:#000">Ксилат 200мл</div>
<div class="a gr" style="left:857px;top:813px;color:#000">Юрия-Ф...</div>
<div class="a gr" style="left:1019px;top:813px;color:#000">ПДВ ...</div>
<div class="a gr" style="right:920px;top:813px;color:#000">12</div>
<div class="a gr" style="right:767px;top:813px;color:#000">97,00</div>
<div class="a gr" style="left:1551px;top:813px;color:#000">50-8...</div>
<div class="a gr" style="left:1659px;top:813px;color:#000">23.07.2...</div>
<div class="a" style="left:244px;top:855px;width:1569px;height:44px;background:#ffffff"></div>
<div class="a" style="left:1016px;top:855px;width:116px;height:44px;background:#98ffc8"></div>
<div class="a" style="left:228px;top:899px;width:1585px;height:1px;background:#a0a0a0"></div>
<div class="a gr" style="left:248px;top:858px;color:#000">Лозартан табл. п/о 100 мг блистер №30</div>
<div class="a gr" style="left:857px;top:858px;color:#000">KRKA d....</div>
<div class="a gr" style="left:1019px;top:858px;color:#000">ПДВ ...</div>
<div class="a gr" style="right:920px;top:858px;color:#000">52</div>
<div class="a gr" style="right:767px;top:858px;color:#000">16,00</div>
<div class="a gr" style="left:1659px;top:858px;color:#000">21.07.2...</div>
<div class="a" style="left:244px;top:900px;width:1569px;height:44px;background:#ff7f6e"></div>
<div class="a" style="left:1016px;top:900px;width:116px;height:44px;background:#98ffc8"></div>
<div class="a" style="left:228px;top:944px;width:1585px;height:1px;background:#a0a0a0"></div>
<div class="a gr" style="left:248px;top:903px;color:#000">Небуфлюзон сусп. 2мл небулы №10</div>
<div class="a gr" style="left:857px;top:903px;color:#000">Юрия-Ф...</div>
<div class="a gr" style="left:1019px;top:903px;color:#000">ПДВ ...</div>
<div class="a gr" style="right:920px;top:903px;color:#000">2</div>
<div class="a gr" style="right:767px;top:903px;color:#000">131,00</div>
<div class="a gr" style="left:1551px;top:903px;color:#000">50-8...</div>
<div class="a gr" style="left:1659px;top:903px;color:#000">23.07.2...</div>
<div class="a" style="left:244px;top:945px;width:1569px;height:44px;background:#ffffff"></div>
<div class="a" style="left:1016px;top:945px;width:116px;height:44px;background:#78b8ff"></div>
<div class="a" style="left:228px;top:989px;width:1585px;height:1px;background:#a0a0a0"></div>
<div class="a gr" style="left:248px;top:948px;color:#000">Пакет майка 30 X 50</div>
<div class="a gr" style="left:857px;top:948px;color:#000">Трейд-П...</div>
<div class="a gr" style="left:1019px;top:948px;color:#000">ПДВ ...</div>
<div class="a gr" style="right:920px;top:948px;color:#000">1</div>
<div class="a gr" style="right:767px;top:948px;color:#000">1,50</div>
<div class="a gr" style="left:1551px;top:948px;color:#000">95-1...</div>
<div class="a gr" style="left:1659px;top:948px;color:#000">03.06.2...</div>
<div class="a" style="left:244px;top:990px;width:1569px;height:44px;background:#ff7f6e"></div>
<div class="a" style="left:1016px;top:990px;width:116px;height:44px;background:#98ffc8"></div>
<div class="a" style="left:228px;top:1034px;width:1585px;height:1px;background:#a0a0a0"></div>
<div class="a gr" style="left:248px;top:993px;color:#000">Рингера р-р инф. 200мл</div>
<div class="a gr" style="left:857px;top:993px;color:#000">Юрия-Ф...</div>
<div class="a gr" style="left:1019px;top:993px;color:#000">ПДВ ...</div>
<div class="a gr" style="right:920px;top:993px;color:#000">24</div>
<div class="a gr" style="right:767px;top:993px;color:#000">51,50</div>
<div class="a gr" style="left:1551px;top:993px;color:#000">50-8...</div>
<div class="a gr" style="left:1659px;top:993px;color:#000">23.07.2...</div>
<div class="a" style="left:853px;top:675px;width:1px;height:359px;background:#a0a0a0"></div>
<div class="a" style="left:1015px;top:675px;width:1px;height:359px;background:#a0a0a0"></div>
<div class="a" style="left:1132px;top:675px;width:1px;height:359px;background:#a0a0a0"></div>
<div class="a" style="left:1243px;top:675px;width:1px;height:359px;background:#a0a0a0"></div>
<div class="a" style="left:1396px;top:675px;width:1px;height:359px;background:#a0a0a0"></div>
<div class="a" style="left:1547px;top:675px;width:1px;height:359px;background:#a0a0a0"></div>
<div class="a" style="left:1655px;top:675px;width:1px;height:359px;background:#a0a0a0"></div>
<div class="a" style="left:1813px;top:675px;width:1px;height:359px;background:#a0a0a0"></div>
<div class="a" style="left:244px;top:675px;width:1569px;height:1px;background:repeating-linear-gradient(90deg,#d8c890 0 1px,#0a246a 1px 3px)"></div>
<div class="a" style="left:244px;top:717px;width:1569px;height:1px;background:repeating-linear-gradient(90deg,#d8c890 0 1px,#0a246a 1px 3px)"></div>
<div class="a" style="left:243px;top:675px;width:1px;height:359px;background:#a0a0a0"></div>
<svg class="a" style="left:231px;top:689px" width="9" height="14"><path d="M1 1l6 6-6 6" fill="none" stroke="#222" stroke-width="1.5"/><path d="M1 4l3 3-3 3" fill="none" stroke="#222" stroke-width="1"/></svg>

<!-- dialog status -->
<div class="a" style="left:221px;top:1350px;width:1597px;height:2px;background:#6a6a6a"></div>
<div class="a" style="left:221px;top:1352px;width:1601px;height:21px;background:#a8a8a8"></div>
<div class="a" style="left:246px;top:1356px;width:605px;height:17px;border:1px solid #999;border-bottom:none"></div>
<div class="a" style="left:253px;top:1361px;font-size:17px;color:#222">8 строк</div>
</body></html>
